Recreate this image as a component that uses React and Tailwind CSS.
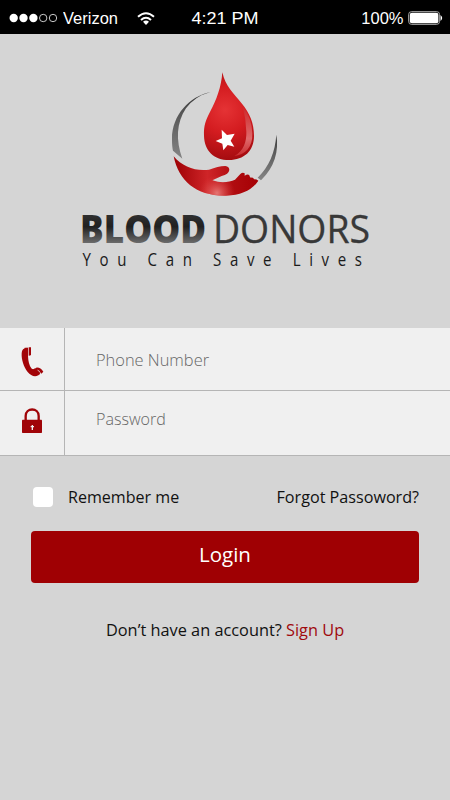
function StatusBar() {
  return (
    <header className="grid h-[34px] grid-cols-3 items-center bg-black pb-px pt-[3px] font-['Liberation_Sans',Arial,sans-serif] text-[17px] leading-none text-white">
      <div className="flex items-center pl-[9px]">
        <svg className="h-[10px] w-[49px] shrink-0" viewBox="0 0 49 10" fill="#fff">
          <circle cx="4.7" cy="5" r="4.2" />
          <circle cx="14.5" cy="5" r="4.2" />
          <circle cx="24.4" cy="5" r="4.2" />
          <circle cx="34.2" cy="5" r="3.7" fill="none" stroke="#ddd" strokeWidth=".9" />
          <circle cx="44" cy="5" r="3.7" fill="none" stroke="#ddd" strokeWidth=".9" />
        </svg>
        <span className="ml-[5px] w-[55px] origin-left scale-x-[0.97]">Verizon</span>
        <svg className="ml-[19px] h-[13px] w-[18px] shrink-0" viewBox="0 0 18 13" fill="none" stroke="#fff" strokeWidth="2">
          <path d="M1 4.7Q9-2.3 17 4.7M4 7.9Q9 3.5 14 7.9" />
          <path d="M6 9.8Q9 7.2 12 9.8L9 13Z" fill="#fff" stroke="none" />
        </svg>
      </div>
      <div className="scale-x-[1.06] text-center">4:21 PM</div>
      <div className="flex items-center justify-end pr-[7px]">
        <span className="mr-[5px] origin-right scale-x-[0.97]">100%</span>
        <svg className="h-[14px] w-[35px]" viewBox="0 0 35 14">
          <rect x=".6" y=".6" width="31" height="12.8" rx="3" fill="none" stroke="#ccc" strokeWidth=".8" />
          <rect x="1.8" y="1.8" width="28.6" height="10.4" rx="2" fill="#fff" />
          <path d="M32.5 4q3.4 3 0 6z" fill="#fff" />
        </svg>
      </div>
    </header>
  );
}

function Logo() {
  return (
    <svg className="mx-auto block h-[210px] w-[320px]" viewBox="-10 0 320 210" fontFamily="'Open Sans','Noto Sans',sans-serif">
      <defs>
        <radialGradient id="drop" gradientUnits="userSpaceOnUse" cx="195" cy="135" r="155">
          <stop offset="0" stopColor="#e53335" />
          <stop offset=".45" stopColor="#d41c20" />
          <stop offset="1" stopColor="#a20b0f" />
        </radialGradient>
        <linearGradient id="shine" x1="0" y1="0" x2="0" y2="1">
          <stop offset="0" stopColor="#cc2629" />
          <stop offset=".65" stopColor="#df6b6c" />
          <stop offset="1" stopColor="#c92b2e" />
        </linearGradient>
        <linearGradient id="hand" x1="0" y1="0" x2="1" y2="0">
          <stop offset="0" stopColor="#9d0004" />
          <stop offset=".4" stopColor="#cf2528" />
          <stop offset=".7" stopColor="#b00c10" />
          <stop offset="1" stopColor="#a60004" />
        </linearGradient>
        <radialGradient id="glow" gradientUnits="userSpaceOnUse" cx="171" cy="384" r="54">
          <stop offset="0" stopColor="#ee8c88" stopOpacity=".8" />
          <stop offset="1" stopColor="#dd4040" stopOpacity="0" />
        </radialGradient>
        <linearGradient id="arc" x1="0" y1="0" x2="0" y2="1">
          <stop offset="0" stopColor="#333" />
          <stop offset=".3" stopColor="#555" />
          <stop offset="1" stopColor="#858585" />
        </linearGradient>
        <linearGradient id="word" gradientUnits="userSpaceOnUse" x1="0" y1="147" x2="0" y2="176">
          <stop offset="0" stopColor="#303030" />
          <stop offset=".4" stopColor="#202020" />
          <stop offset="1" stopColor="#707070" />
        </linearGradient>
      </defs>
      <g transform="translate(85 -3) scale(.33333)">
        <path d="M152 81C88 94 36 150 36 222Q36 246 39 257L67 281C47 225 49 174 78 130Q105 93 152 81Z" fill="url(#arc)" />
        <path d="M349 209Q362 287 303 346L293 338Q344 288 349 209Z" fill="url(#arc)" />
        <path d="M187 22C184 67 169 105 151 139C137 166 131 181 132 212C133 258 163 285 207 285C252 285 282 258 282 213C282 173 269 145 246 116C222 86 196 65 187 22Z" fill="url(#drop)" />
        <path d="M248 124Q275 158 277 205C279 247 255 270 223 273C251 258 260 229 259 200Q258 162 248 124Z" fill="url(#shine)" />
        <path d="M185 194L201 210L224 206L212 227L223 245L203 240L190 256L187 236L167 228L186 220Z" fill="#fff" />
        <path d="M41 274C67 306 109 320 147 314C166 308 180 303 196 303Q208 304 208 315Q206 328 185 333L157 346C181 355 208 352 225 344L241 327Q248 320 254 325V332Q264 325 268 331Q269 336 272 338Q280 335 282 343Q289 342 295 347Q267 390 198 392C111 394 56 350 41 274Z" fill="url(#hand)" />
        <path d="M41 274C67 306 109 320 147 314C166 308 180 303 196 303Q208 304 208 315Q206 328 185 333L157 346C181 355 208 352 225 344L241 327Q248 320 254 325V332Q264 325 268 331Q269 336 272 338Q280 335 282 343Q289 342 295 347Q267 390 198 392C111 394 56 350 41 274Z" fill="url(#glow)" />
      </g>
      <text x="5" y="175" fontSize="39.5" fontWeight="800" fill="url(#word)" textLength="126" lengthAdjust="spacingAndGlyphs">BLOOD</text>
      <text x="138" y="175" fontSize="39" fill="#383838" stroke="#383838" strokeWidth=".3" textLength="157" lengthAdjust="spacingAndGlyphs">DONORS</text>
      <g transform="translate(7.5 198) scale(.86 1)">
        <text fontSize="17.5" fill="#1b1b1b" textLength="325" lengthAdjust="spacing">You Can Save Lives</text>
      </g>
    </svg>
  );
}

function PhoneIcon() {
  return (
    <svg className="h-[30px] w-[23px]" viewBox="0 0 69 90" fill="#a20408">
      <path d="M19 2Q2 3 2 19C1 38 8 60 20 75Q32 90 47 87Q54 86 54 81L43 65Q36 69 31 64Q22 52 21 27Z" />
      <path d="M11 2H21V27H12ZM23 1H30V24Q28 26 23 26ZM34 69L43 63L58 78L54 85ZM45 62Q57 59 67 74L61 80Q56 70 45 66Z" />
    </svg>
  );
}

function LockIcon() {
  return (
    <svg className="h-[26px] w-[20px]" viewBox="0 0 60 78">
      <path d="M11 36V24C11-2 50-2 50 24V36" fill="none" stroke="#a00408" strokeWidth="7" />
      <rect y="35" width="60" height="40" rx="2" fill="#a00408" />
      <path d="M29 51h4v3h3v4h-3v8h-4v-8h-3v-4h3z" fill="#eee" />
    </svg>
  );
}

export default function App() {
  return (
    <main className="flex h-[800px] w-[450px] flex-col overflow-hidden bg-[#d5d5d5] font-['Open_Sans','Noto_Sans',sans-serif] text-[17px] text-[#111]">
      <StatusBar />
      <div className="mt-[34px] h-[260px]">
        <Logo />
      </div>
      <form className="h-[128px] shrink-0 border-b border-[#b5b5b5] bg-[#f0f0f0] font-light text-[#666]">
        <div className="flex h-[63px] border-b border-[#b5b5b5]">
          <div className="flex w-[65px] items-center justify-center border-r border-[#b5b5b5] pt-[5px]">
            <PhoneIcon />
          </div>
          <div className="flex items-center pl-[31px] pt-[2px]">
            <span className="origin-left scale-x-[0.965]">Phone Number</span>
          </div>
        </div>
        <div className="flex h-[64px]">
          <div className="flex w-[65px] items-center justify-center border-r border-[#b5b5b5] pb-[4px]">
            <LockIcon />
          </div>
          <div className="flex items-center pb-[9px] pl-[31px]">
            <span className="origin-left scale-x-[0.945]">Password</span>
          </div>
        </div>
      </form>
      <div className="mt-[31px] flex h-[20px] items-center justify-between pl-[33px] pr-[31px]">
        <label className="flex items-center gap-[15px]">
          <span className="size-[20px] rounded-[4px] bg-white" />
          <span className="origin-left scale-x-[0.945]">Remember me</span>
        </label>
        <span className="origin-right scale-x-[0.95]">Forgot Passoword?</span>
      </div>
      <button className="mx-[31px] mt-[24px] flex h-[52px] w-[388px] shrink-0 items-center justify-center rounded-[4px] bg-[#9f0003] pb-[6px] text-[20.5px] text-white">
        <span>Login</span>
      </button>
      <p className="mt-[35px] whitespace-nowrap text-center leading-6">
        <span className="inline-block scale-x-[0.96]">
          Don’t have an account? <span className="text-[#a00a0d]">Sign Up</span>
        </span>
      </p>
    </main>
  );
}
